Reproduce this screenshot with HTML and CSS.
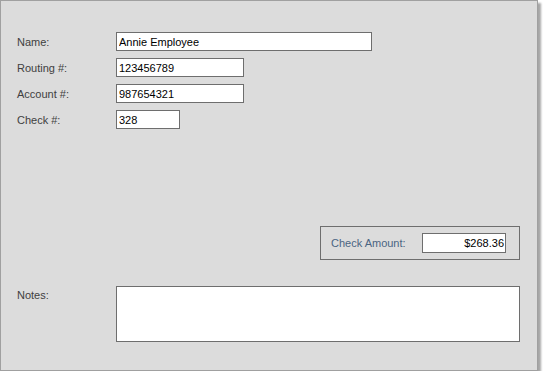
FILE: index.html
```html
<!DOCTYPE html>
<html lang="en">
<head>
  <meta charset="UTF-8" />
  <title>Check Entry</title>
  <link rel="stylesheet" href="styles.css">
</head>
<body>
  <div class="panel">
    <div class="fields">
      <label>Name:</label>
      <input type="text" class="wide" value="Annie Employee" />
      <label>Routing #:</label>
      <input type="text" class="mid" value="123456789" />
      <label>Account #:</label>
      <input type="text" class="mid" value="987654321" />
      <label>Check #:</label>
      <input type="text" class="short" value="328" />
    </div>

    <div class="amount-row">
      <div class="amount-box">
        <span class="amount-label">Check Amount:</span>
        <input type="text" class="amount" value="$268.36" />
      </div>
    </div>

    <div class="notes-row">
      <label>Notes:</label>
      <textarea></textarea>
    </div>
  </div>
</body>
</html>
```

FILE: styles.css
```css
:root {
  --bg: #dcdcdc;
  --frame: #a0a0a0;
  --edge: #6e6e6e;
  --label: #404040;
}

* {
  box-sizing: border-box;
}

body {
  margin: 0;
  background: #fff;
  font-family: 'Liberation Sans', Arial, sans-serif;
  font-size: 11px;
}

.panel {
  width: 538px;
  height: 371px;
  background: var(--bg);
  border: 1px solid var(--frame);
  box-shadow: 3px 3px 2px rgba(0, 0, 0, 0.35);
  padding: 31px 17px 0 16px;
  display: flex;
  flex-direction: column;
}

label {
  color: var(--label);
}

input, textarea {
  font-family: inherit;
  font-size: 11px;
  color: #000;
  background: #fff;
  border: 1px solid var(--edge);
  border-radius: 0;
  outline: none;
  margin: 0;
}

input {
  height: 19px;
  padding: 0 1px 0 2px;
}

.fields {
  display: grid;
  grid-template-columns: 99px auto;
  row-gap: 7px;
  align-items: center;
  justify-items: start;
}

.wide { width: 256px; }
.mid { width: 128px; }
.short { width: 64px; }

.amount-row {
  display: flex;
  justify-content: flex-end;
  margin-top: 97px;
}

.amount-box {
  width: 200px;
  height: 34px;
  border: 1px solid var(--edge);
  display: flex;
  align-items: center;
  justify-content: space-between;
  padding: 0 13px 0 10px;
}

.amount-label {
  color: #4a6482;
}

.amount {
  width: 84px;
  height: 20px;
  text-align: right;
}

.notes-row {
  display: flex;
  margin-top: 26px;
}

.notes-row label {
  width: 99px;
  margin-top: 3px;
}

textarea {
  width: 404px;
  height: 56px;
  resize: none;
  padding: 2px;
}
```
